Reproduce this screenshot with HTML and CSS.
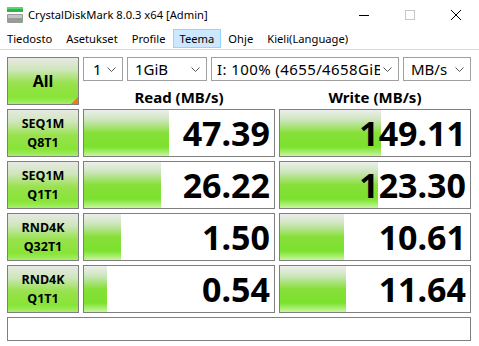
FILE: index.html
```html
<!DOCTYPE html>
<html>
<head>
<meta charset="utf-8">
<link rel="stylesheet" href="styles.css">
</head>
<body>
<div class="window">
  <div class="titlebar">
    <svg class="appicon" width="16" height="16" viewBox="0 0 16 16">
      <rect x="0" y="0" width="16" height="5" fill="#2fb34a"/>
      <rect x="0" y="0" width="16" height="2" fill="#5cd66e"/>
      <rect x="0" y="7" width="16" height="9" rx="1" fill="#9a9a9a"/>
      <rect x="1" y="8" width="14" height="3" fill="#c4c4c4"/>
      <rect x="12" y="12" width="2" height="2" fill="#3fcf4f"/>
    </svg>
    <span class="title">CrystalDiskMark 8.0.3 x64 [Admin]</span>
    <div class="controls">
      <svg width="10" height="10" viewBox="0 0 10 10" class="ctl"><line x1="0" y1="5.5" x2="10" y2="5.5" stroke="#000" stroke-width="1"/></svg>
      <svg width="10" height="10" viewBox="0 0 10 10" class="ctl"><rect x="0.5" y="0.5" width="9" height="9" fill="none" stroke="#c8c8c8" stroke-width="1"/></svg>
      <svg width="10" height="10" viewBox="0 0 10 10" class="ctl"><path d="M0 0 L10 10 M10 0 L0 10" stroke="#000" stroke-width="1"/></svg>
    </div>
  </div>
  <div class="menubar">
    <span class="mi">Tiedosto</span>
    <span class="mi">Asetukset</span>
    <span class="mi">Profile</span>
    <span class="mi active">Teema</span>
    <span class="mi">Ohje</span>
    <span class="mi">Kieli(Language)</span>
  </div>
  <div class="main">
    <div class="btn all">All<span class="corner"></span></div>
    <div class="combos">
      <div class="combo c1"><span class="ctext">1</span><svg class="chev" width="9" height="5" viewBox="0 0 9 5"><path d="M0.5 0.5 L4.5 4.5 L8.5 0.5" fill="none" stroke="#555" stroke-width="1"/></svg></div>
      <div class="combo c2"><span class="ctext">1GiB</span><svg class="chev" width="9" height="5" viewBox="0 0 9 5"><path d="M0.5 0.5 L4.5 4.5 L8.5 0.5" fill="none" stroke="#555" stroke-width="1"/></svg></div>
      <div class="combo c3"><span class="ctext wide">I: 100% (4655/4658GiB)</span><svg class="chev" width="9" height="5" viewBox="0 0 9 5"><path d="M0.5 0.5 L4.5 4.5 L8.5 0.5" fill="none" stroke="#555" stroke-width="1"/></svg></div>
      <div class="combo c4"><span class="ctext">MB/s</span><svg class="chev" width="9" height="5" viewBox="0 0 9 5"><path d="M0.5 0.5 L4.5 4.5 L8.5 0.5" fill="none" stroke="#555" stroke-width="1"/></svg></div>
    </div>
    <div class="head">Read (MB/s)</div>
    <div class="head">Write (MB/s)</div>

    <div class="btn lbl">SEQ1M<br>Q8T1</div>
    <div class="val" style="--w:85px">47.39</div>
    <div class="val" style="--w:101px">149.11</div>

    <div class="btn lbl">SEQ1M<br>Q1T1</div>
    <div class="val" style="--w:77px">26.22</div>
    <div class="val" style="--w:98px">123.30</div>

    <div class="btn lbl">RND4K<br>Q32T1</div>
    <div class="val" style="--w:37px">1.50</div>
    <div class="val" style="--w:64px">10.61</div>

    <div class="btn lbl">RND4K<br>Q1T1</div>
    <div class="val" style="--w:23px">0.54</div>
    <div class="val" style="--w:66px">11.64</div>

    <div class="comment"></div>
  </div>
</div>
</body>
</html>
```
FILE: styles.css
```css
html, body {
  margin: 0;
  padding: 0;
  background: #fff;
}
body {
  font-family: "Noto Sans", "Open Sans", sans-serif;
  color: #000;
}
.window {
  width: 479px;
  height: 346px;
  background: #fff;
  overflow: hidden;
}
.titlebar {
  height: 29px;
  display: flex;
  align-items: center;
  padding-left: 7px;
}
.appicon {
  display: block;
  margin-top: 1px;
}
.title {
  margin-left: 5px;
  font-size: 11.2px;
  margin-top: -1px;
}
.controls {
  margin-left: auto;
  display: flex;
  align-items: center;
  gap: 36px;
  padding-right: 18px;
  margin-top: 1px;
}
.ctl { display: block; }
.menubar {
  height: 20px;
  display: flex;
  align-items: stretch;
  border-bottom: 1px solid #d9d9d9;
  font-size: 11.2px;
}
.mi {
  display: flex;
  align-items: center;
  padding: 0 6px;
  border: 1px solid transparent;
  height: 17px;
}
.mi.active {
  background: #cce8ff;
  border-color: #99d1ff;
}
.main {
  display: grid;
  grid-template-columns: 72px 192px 192px;
  grid-template-rows: 24px 20px 48px 48px 48px 48px 24px;
  column-gap: 4px;
  row-gap: 4px;
  padding: 7px 0 0 7px;
}
.btn {
  box-sizing: border-box;
  border: 1px solid #7f7f7f;
  background: linear-gradient(to bottom, #e6e9e3 0%, #cfe6bd 25%, #98e24c 55%, #88e436 85%, #a6ef6c 100%);
  display: flex;
  align-items: center;
  justify-content: center;
  text-align: center;
  font-weight: bold;
  position: relative;
}
.all {
  grid-row: 1 / span 2;
  font-size: 16px;
}
.corner {
  position: absolute;
  right: 0;
  bottom: 0;
  width: 0;
  height: 0;
  border-left: 7px solid transparent;
  border-bottom: 7px solid #f07a16;
}
.lbl {
  font-size: 12.5px;
  line-height: 19px;
  padding-bottom: 1px;
}
.combos {
  grid-column: 2 / span 2;
  display: flex;
}
.combo {
  box-sizing: border-box;
  height: 24px;
  border: 1px solid #a0a0a0;
  display: flex;
  align-items: center;
  padding: 0 6px 0 7px;
  font-size: 15px;
  overflow: hidden;
  white-space: nowrap;
}
.ctext {
  flex: 1;
  min-width: 0;
  overflow: hidden;
}
.ctext.wide {
  letter-spacing: 0.4px;
}
.chev { flex: none; margin-left: 3px; }
.c1 { width: 40px; margin-right: 4px; padding-left: 9px; }
.c2 { width: 80px; margin-right: 4px; }
.c3 { width: 188px; margin-right: 4px; padding-left: 5px; }
.c4 { width: 68px; }
.head {
  font-weight: bold;
  font-size: 15px;
  text-align: center;
  line-height: 20px;
  margin-top: 2px;
}
.val {
  box-sizing: border-box;
  border: 1px solid #7f7f7f;
  background: linear-gradient(to bottom, #eceeec 0%, #cce6bb 22%, #86df38 50%, #7ce12e 80%, #c5f79c 100%) no-repeat;
  background-size: var(--w) 100%;
  text-align: right;
  font-weight: bold;
  font-size: 34px;
  line-height: 46px;
  padding-right: 4px;
}
.comment {
  grid-column: 1 / span 3;
  box-sizing: border-box;
  border: 1px solid #7f7f7f;
}
```
